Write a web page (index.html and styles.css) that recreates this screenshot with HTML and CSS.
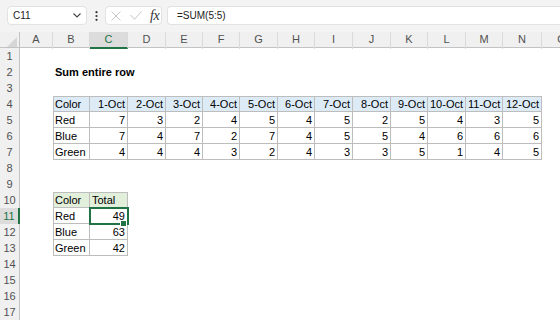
FILE: index.html
```html
<!DOCTYPE html>
<html lang="en">
<head>
    <meta charset="UTF-8">
    <title>Sum entire row</title>
    <link rel="stylesheet" href="styles.css">
</head>
<body>
    <div class="formula-bar">
        <div class="name-box">
            <span>C11</span>
            <svg width="8" height="5" viewBox="0 0 8 5"><path d="M0.5 0.5 L4 4 L7.5 0.5" fill="none" stroke="#444" stroke-width="1.1"/></svg>
        </div>
        <div class="dots">
            <svg width="3" height="10" viewBox="0 0 3 10"><circle cx="1.5" cy="1.2" r="1.1" fill="#333"/><circle cx="1.5" cy="5" r="1.1" fill="#333"/><circle cx="1.5" cy="8.8" r="1.1" fill="#333"/></svg>
        </div>
        <div class="fx-box">
            <svg class="icon-x" width="10" height="10" viewBox="0 0 10 10"><path d="M0.5 0.5 L9.5 9.5 M9.5 0.5 L0.5 9.5" stroke="#c4c4c4" stroke-width="1"/></svg>
            <svg class="icon-check" width="12" height="9" viewBox="0 0 12 9"><path d="M0.5 4 L4.5 8.3 L11.5 0.5" fill="none" stroke="#c4c4c4" stroke-width="1"/></svg>
            <span class="fx">fx</span>
        </div>
        <div class="formula">=SUM(5:5)</div>
    </div>

    <div class="sheet">
        <div class="row col-head">
            <div class="corner"><svg width="10" height="10" viewBox="0 0 10 10"><polygon points="10,0 10,10 0,10" fill="#d6d6d6"/></svg></div>
            <div>A</div><div>B</div><div class="active">C</div><div>D</div><div>E</div><div>F</div><div>G</div>
            <div>H</div><div>I</div><div>J</div><div>K</div><div>L</div><div>M</div><div>N</div><div>O</div>
        </div>

        <div class="row"><div class="rh">1</div></div>
        <div class="row"><div class="rh">2</div><div></div><div class="cell title">Sum entire row</div></div>
        <div class="row"><div class="rh">3</div></div>

        <div class="row">
            <div class="rh">4</div><div></div>
            <div class="cell b bt bl hb">Color</div>
            <div class="cell b bt hb num">1-Oct</div><div class="cell b bt hb num">2-Oct</div><div class="cell b bt hb num">3-Oct</div>
            <div class="cell b bt hb num">4-Oct</div><div class="cell b bt hb num">5-Oct</div><div class="cell b bt hb num">6-Oct</div>
            <div class="cell b bt hb num">7-Oct</div><div class="cell b bt hb num">8-Oct</div><div class="cell b bt hb num">9-Oct</div>
            <div class="cell b bt hb num">10-Oct</div><div class="cell b bt hb num">11-Oct</div><div class="cell b bt hb num">12-Oct</div>
        </div>
        <div class="row">
            <div class="rh">5</div><div></div>
            <div class="cell b bl">Red</div>
            <div class="cell b num">7</div><div class="cell b num">3</div><div class="cell b num">2</div><div class="cell b num">4</div>
            <div class="cell b num">5</div><div class="cell b num">4</div><div class="cell b num">5</div><div class="cell b num">2</div>
            <div class="cell b num">5</div><div class="cell b num">4</div><div class="cell b num">3</div><div class="cell b num">5</div>
        </div>
        <div class="row">
            <div class="rh">6</div><div></div>
            <div class="cell b bl">Blue</div>
            <div class="cell b num">7</div><div class="cell b num">4</div><div class="cell b num">7</div><div class="cell b num">2</div>
            <div class="cell b num">7</div><div class="cell b num">4</div><div class="cell b num">5</div><div class="cell b num">5</div>
            <div class="cell b num">4</div><div class="cell b num">6</div><div class="cell b num">6</div><div class="cell b num">6</div>
        </div>
        <div class="row">
            <div class="rh">7</div><div></div>
            <div class="cell b bl">Green</div>
            <div class="cell b num">4</div><div class="cell b num">4</div><div class="cell b num">4</div><div class="cell b num">3</div>
            <div class="cell b num">2</div><div class="cell b num">4</div><div class="cell b num">3</div><div class="cell b num">3</div>
            <div class="cell b num">5</div><div class="cell b num">1</div><div class="cell b num">4</div><div class="cell b num">5</div>
        </div>

        <div class="row"><div class="rh">8</div></div>
        <div class="row"><div class="rh">9</div></div>

        <div class="row">
            <div class="rh">10</div><div></div>
            <div class="cell b bt bl hg">Color</div><div class="cell b bt hg">Total</div>
        </div>
        <div class="row">
            <div class="rh active">11</div><div></div>
            <div class="cell b bl">Red</div><div class="cell b num selected">49<span class="handle"></span></div>
        </div>
        <div class="row">
            <div class="rh">12</div><div></div>
            <div class="cell b bl">Blue</div><div class="cell b num">63</div>
        </div>
        <div class="row">
            <div class="rh">13</div><div></div>
            <div class="cell b bl">Green</div><div class="cell b num">42</div>
        </div>

        <div class="row"><div class="rh">14</div></div>
        <div class="row"><div class="rh">15</div></div>
        <div class="row"><div class="rh">16</div></div>
        <div class="row"><div class="rh">17</div></div>
    </div>
</body>
</html>
```

FILE: styles.css
```css
/* Reset */
* {
    margin: 0;
    padding: 0;
    box-sizing: border-box;
}

body {
    font-family: "Liberation Sans", Arial, sans-serif;
    background-color: #ffffff;
    width: 560px;
    height: 320px;
    overflow: hidden;
}

/* Formula bar */
.formula-bar {
    height: 32px;
    background-color: #f3f3f3;
    display: flex;
    align-items: flex-start;
    padding: 6px 0 0 7px;
    font-size: 10px;
    color: #222;
}

.name-box {
    width: 80px;
    height: 19px;
    background-color: #fff;
    border: 1px solid #e2e2e2;
    border-radius: 4px;
    display: flex;
    align-items: center;
    justify-content: space-between;
    padding: 0 5px 0 5px;
}

.dots {
    width: 18px;
    height: 19px;
    display: flex;
    align-items: center;
    justify-content: center;
}

.fx-box {
    width: 57px;
    height: 19px;
    background-color: #fff;
    border: 1px solid #e2e2e2;
    border-radius: 4px;
    display: flex;
    align-items: center;
    padding-left: 5px;
}

.icon-check {
    margin-left: 9px;
}

.fx {
    font-family: "Liberation Serif", "Times New Roman", serif;
    font-style: italic;
    font-size: 14px;
    color: #333;
    margin-left: 8px;
    letter-spacing: -0.5px;
}

.formula {
    flex: 1;
    height: 19px;
    margin-left: 5px;
    background-color: #fff;
    border: 1px solid #e2e2e2;
    border-right: none;
    border-radius: 4px 0 0 4px;
    padding-left: 9px;
    line-height: 17px;
}

/* Sheet grid */
.row {
    display: grid;
    grid-template-columns: 20px 33px 37px 38px 38px 37px 37px 38px 37px 38px 38px 37px 38px 37px 39px 40px;
    height: 16px;
    font-size: 11px;
    line-height: 16px;
}

.col-head {
    background-color: #f0f0f0;
    border-bottom: 1px solid #c3c3c3;
    color: #505050;
    text-align: center;
    line-height: 15px;
}

.col-head div {
    border-right: 1px solid #dadada;
}

.col-head .corner {
    display: flex;
    align-items: flex-end;
    justify-content: flex-end;
    padding: 0 2px 2px 0;
    border-right: 1px solid #c3c3c3;
}

.col-head .active {
    background-color: #dcdcdc;
    border-bottom: 2px solid #217346;
    color: #217346;
}

.rh {
    background-color: #f0f0f0;
    border-right: 1px solid #c3c3c3;
    color: #505050;
    text-align: center;
}

.rh.active {
    background-color: #dcdcdc;
    border-right: 2px solid #217346;
    color: #217346;
}

.cell {
    padding: 0 3px 0 2px;
    white-space: nowrap;
    color: #000;
}

.num {
    text-align: right;
}

.title {
    font-weight: bold;
    overflow: visible;
}

/* Table borders */
.b {
    box-shadow: inset -1px -1px 0 #bdbdbd;
}

.b.bt {
    box-shadow: inset -1px -1px 0 #bdbdbd, inset 0 1px 0 #bdbdbd;
}

.b.bl {
    box-shadow: inset -1px -1px 0 #bdbdbd, inset 1px 0 0 #bdbdbd;
}

.b.bt.bl {
    box-shadow: inset -1px -1px 0 #bdbdbd, inset 1px 1px 0 #bdbdbd;
}

.hb {
    background-color: #ddebf7;
}

.hg {
    background-color: #e2efda;
}

/* Active cell */
.selected {
    position: relative;
}

.selected::after {
    content: "";
    position: absolute;
    top: -1px;
    left: -1px;
    right: -1px;
    bottom: -1px;
    border: 2px solid #217346;
}

.handle {
    position: absolute;
    right: 1px;
    bottom: -3px;
    width: 7px;
    height: 7px;
    background-color: #217346;
    border: 1px solid #fff;
    z-index: 1;
}
```
